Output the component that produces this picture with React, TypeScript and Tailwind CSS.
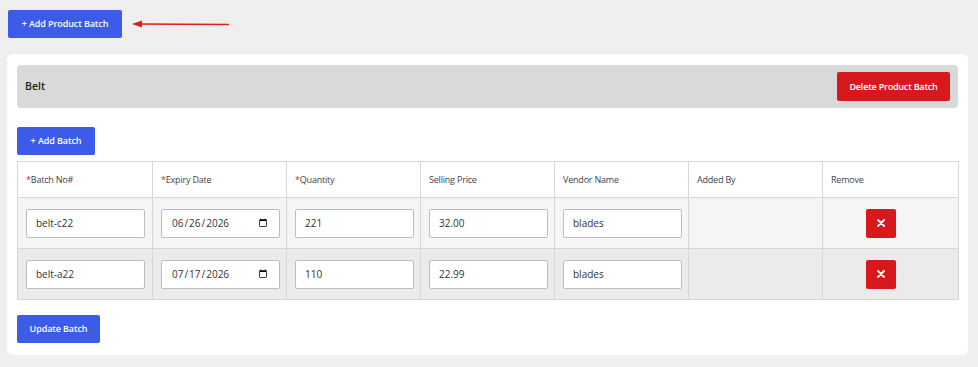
import React from "react";

const rows = [
  { batch: "belt-c22", date: "2026-06-26", qty: "221", price: "32.00", vendor: "blades", bg: "bg-[#f5f5f5]" },
  { batch: "belt-a22", date: "2026-07-17", qty: "110", price: "22.99", vendor: "blades", bg: "bg-[#ebebeb]" },
];

const inputCls =
  "w-[119px] h-[29px] border border-[#bdbdbd] rounded-[2px] bg-white px-[9px] text-[10px] text-[#333] outline-none";

const btn = "rounded-[2px] text-white text-[9px] font-semibold tracking-[-0.1px]";

function Head({ label, req }: { label: string; req?: boolean }) {
  return (
    <th className="border border-[#d6d6d6] h-[36px] px-[8px] text-left align-middle text-[9px] font-medium tracking-[-0.2px] text-[#444]">
      {req && <span className="text-[#d7191e]">*</span>}
      {label}
    </th>
  );
}

export default function App() {
  return (
    <div className="w-[978px] h-[367px] bg-[#efefef] overflow-hidden pt-[10px]" style={{ fontFamily: '"Open Sans", "Noto Sans", sans-serif' }}>
      <div className="flex items-center pl-[8px] h-[28px]">
        <button className={`h-[28px] w-[114px] bg-[#3b5be8] ${btn}`}>
          + Add Product Batch
        </button>
        <svg width="100" height="10" viewBox="0 0 100 10" className="ml-[10px]">
          <line x1="6" y1="5" x2="97" y2="5.5" stroke="#e31b1b" strokeWidth="1.5" />
          <polygon points="0,5 10,1.5 10,8.5" fill="#e31b1b" />
        </svg>
      </div>
      <div className="mt-[16px] mx-[7px] w-[961px] h-[301px] bg-white rounded-[6px] px-[10px] pt-[11px]">
        <div className="h-[43px] bg-[#d9d9d9] rounded-[4px] flex items-center justify-between pl-[8px] pr-[8px]">
          <span className="text-[10.5px] font-semibold text-[#222]">Belt</span>
          <button className={`h-[29px] w-[113px] bg-[#d7191e] ${btn} tracking-[-0.2px]`}>
            Delete Product Batch
          </button>
        </div>
        <button className={`block mt-[19px] h-[28px] w-[78px] bg-[#3b5be8] ${btn}`}>
          + Add Batch
        </button>
        <table className="mt-[6px] w-[941px] table-fixed border-collapse">
          <colgroup>
            <col className="w-[135px]" />
            <col className="w-[134px]" />
            <col className="w-[134px]" />
            <col className="w-[134px]" />
            <col className="w-[134px]" />
            <col className="w-[134px]" />
            <col className="w-[136px]" />
          </colgroup>
          <thead>
            <tr className="bg-white">
              <Head label="Batch No#" req />
              <Head label="Expiry Date" req />
              <Head label="Quantity" req />
              <Head label="Selling Price" />
              <Head label="Vendor Name" />
              <Head label="Added By" />
              <Head label="Remove" />
            </tr>
          </thead>
          <tbody>
            {rows.map((r) => (
              <tr key={r.batch} className={r.bg}>
                <td className="border border-[#d6d6d6] h-[51px] px-[8px] align-middle">
                  <input className={inputCls} defaultValue={r.batch} />
                </td>
                <td className="border border-[#d6d6d6] px-[8px] align-middle">
                  <input type="date" className={inputCls} defaultValue={r.date} />
                </td>
                <td className="border border-[#d6d6d6] px-[8px] align-middle">
                  <input className={inputCls} defaultValue={r.qty} />
                </td>
                <td className="border border-[#d6d6d6] px-[8px] align-middle">
                  <input className={inputCls} defaultValue={r.price} />
                </td>
                <td className="border border-[#d6d6d6] px-[8px] align-middle">
                  <input className={inputCls} defaultValue={r.vendor} />
                </td>
                <td className="border border-[#d6d6d6] px-[8px] align-middle"></td>
                <td className="border border-[#d6d6d6] pl-[43px] align-middle text-left">
                  <button className="inline-flex items-center justify-center h-[29px] w-[30px] bg-[#d7191e] rounded-[2px] align-middle">
                    <svg width="8" height="8" viewBox="0 0 8 8">
                      <path d="M1 1L7 7M7 1L1 7" stroke="white" strokeWidth="1.8" strokeLinecap="round" />
                    </svg>
                  </button>
                </td>
              </tr>
            ))}
          </tbody>
        </table>
        <button className={`block mt-[15px] h-[28px] w-[83px] bg-[#3b5be8] ${btn}`}>
          Update Batch
        </button>
      </div>
    </div>
  );
}
